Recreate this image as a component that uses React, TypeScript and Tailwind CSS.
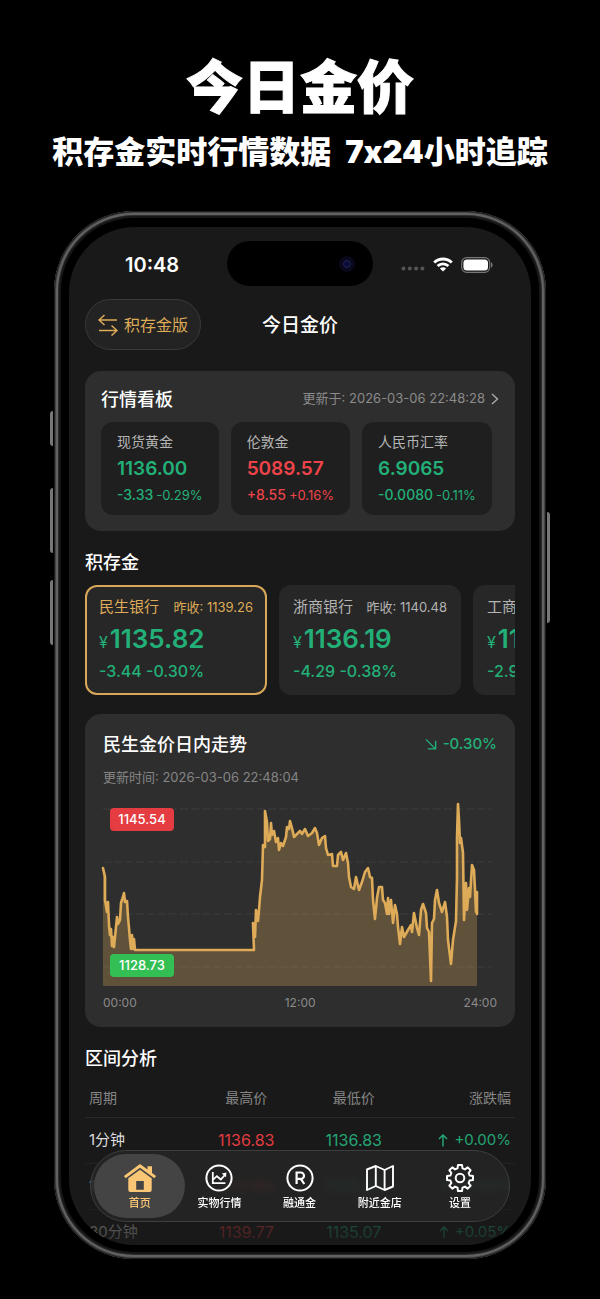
import clsx from "clsx";
import type { ReactNode } from "react";

type Tone = "up" | "down";

const toneColor: Record<Tone, string> = {
  up: "text-[#ee4449]",
  down: "text-[#23b078]",
};

const quotes: {
  name: string;
  price: string;
  change: string;
  percent: string;
  tone: Tone;
}[] = [
  { name: "现货黄金", price: "1136.00", change: "-3.33", percent: "-0.29%", tone: "down" },
  { name: "伦敦金", price: "5089.57", change: "+8.55", percent: "+0.16%", tone: "up" },
  { name: "人民币汇率", price: "6.9065", change: "-0.0080", percent: "-0.11%", tone: "down" },
];

const banks = [
  { name: "民生银行", last: "1139.26", price: "1135.82", change: "-3.44 -0.30%" },
  { name: "浙商银行", last: "1140.48", price: "1136.19", change: "-4.29 -0.38%" },
  { name: "工商银行", last: "1139.10", price: "1136.12", change: "-2.98 -0.26%" },
];

const ranges = [
  { period: "1分钟", high: "1136.83", low: "1136.83", change: "+0.00%" },
  { period: "10分钟", high: "1137.80", low: "1135.80", change: "+0.03%" },
  { period: "30分钟", high: "1139.77", low: "1135.07", change: "+0.05%" },
];

const trend =
  "0,68 2,77 2,100 4,112 5,102 6,125 7,135 8,129 9,146 10,137 11,147 13,127 14,117 15,124 17,120 18,103 19,100 21,93 22,102 24,101 25,117 26,128 27,140 28,149 29,135 30,149 31,139 32,150 151,150 150,123 152,137 153,110 155,121 156,110 157,97 159,80 160,45 162,47 162,11 164,22 165,41 167,39 168,23 169,35 171,31 173,42 175,38 176,50 178,43 180,46 183,37 184,27 186,29 187,21 189,28 191,37 194,34 197,31 199,34 202,29 205,36 209,33 212,28 214,33 216,45 219,38 222,36 223,48 225,55 229,54 230,66 234,66 235,55 238,52 240,60 243,53 245,63 246,77 248,87 251,89 253,77 256,90 259,82 262,72 265,68 267,77 269,78 270,100 272,119 274,98 276,87 279,87 280,100 282,103 284,114 285,98 286,114 288,100 290,123 292,105 294,114 295,127 297,144 299,127 301,137 305,130 308,125 309,132 311,113 314,128 316,135 318,110 320,104 323,113 324,128 326,132 328,181 329,123 331,119 332,100 334,90 336,103 339,112 342,102 344,117 345,140 348,164 350,140 353,121 354,77 354,37 355,4 356,20 357,43 358,38 360,53 361,120 363,83 364,110 366,88 367,97 369,65 371,70 372,90 373,112 374,92 374,114";

function TrendChart() {
  return (
    <div className="relative">
      <svg
        viewBox="0 0 394 186"
        preserveAspectRatio="none"
        className="h-[186px] w-full overflow-visible"
        role="img"
        aria-label="日内走势"
      >
        {[9, 62, 114, 167].map((y) => (
          <line key={y} x1="0" x2="388" y1={y} y2={y} stroke="#3c3c3c" strokeDasharray="8 3" />
        ))}
        <polygon points={`0,186 ${trend} 374,186`} fill="#deab58" fillOpacity="0.29" />
        <polyline
          points={trend}
          fill="none"
          stroke="#deab58"
          strokeWidth="2.6"
          strokeLinejoin="round"
          strokeLinecap="round"
        />
      </svg>
      <span className="absolute top-2 left-[7px] flex h-[23px] w-16 items-center justify-center rounded bg-[#e53c41] text-[13px] font-medium">
        1145.54
      </span>
      <span className="absolute bottom-[9px] left-[7px] flex h-[23px] w-16 items-center justify-center rounded bg-[#34bf55] text-[13px] font-medium">
        1128.73
      </span>
    </div>
  );
}

function StatusBar() {
  return (
    <div className="grid h-[45px] grid-cols-[1fr_auto_1fr] items-center">
      <span className="pt-0.5 pl-14 text-xl font-semibold">10:48</span>
      <div className="flex h-[45px] w-[146px] items-center justify-end rounded-full bg-black pr-[18px]">
        <span className="flex size-4 items-center justify-center rounded-full bg-[#08081a]">
          <span className="size-2 rounded-full border border-[#23235c] bg-[#0b0b35]" />
        </span>
      </div>
      <div className="flex items-center justify-end gap-2 pt-0.5 pr-[38px]">
        <svg width="24" height="5" viewBox="0 0 24 5" className="mt-2" fill="#555">
          <circle cx="2.5" cy="2.5" r="2" />
          <circle cx="8.8" cy="2.5" r="2" />
          <circle cx="15.1" cy="2.5" r="2" />
          <circle cx="21.4" cy="2.5" r="2" />
        </svg>
        <svg width="20" height="15" viewBox="0 0 20 15" fill="none" stroke="#fff" strokeWidth="2.8">
          <path d="M1.2 5.6a12.5 12.5 0 0 1 17.6 0" />
          <path d="M4.6 9.1a7.7 7.7 0 0 1 10.8 0" />
          <path d="M10 14.6 6.9 11.5a4.4 4.4 0 0 1 6.2 0Z" fill="#fff" stroke="none" />
        </svg>
        <svg width="32" height="16" viewBox="0 0 32 16">
          <rect x="0.7" y="0.7" width="28" height="14.6" rx="5" fill="none" stroke="#777" strokeWidth="1.2" />
          <rect x="2.4" y="2.4" width="24.6" height="11.2" rx="3.5" fill="#fff" />
          <path d="M30 5.3c2.2 1 2.2 4.400 0 5.400Z" fill="#777" />
        </svg>
      </div>
    </div>
  );
}

function HomeIcon() {
  return (
    <svg width="32" height="28" viewBox="0 0 32 28" fill="#f8c675">
      <path d="M16 0 .6 11.400a1 1 0 0 0-.2 1.400l.5.7a1 1 0 0 0 1.400.2L16 3.800l13.700 9.900a1 1 0 0 0 1.400-.2l.5-.7a1 1 0 0 0-.2-1.400L28 8.900V2.200h-4.500v3.400Z" />
      <path d="M16 5.700 4.300 14.200V26a2 2 0 0 0 2 2h19.400a2 2 0 0 0 2-2V14.200Z" />
      <path d="M12.200 17h7.600v8.800h-7.600Z" fill="#444" />
    </svg>
  );
}

function MarketIcon() {
  return (
    <svg width="28" height="28" viewBox="0 0 28 28" fill="none" stroke="#fff" strokeWidth="1.8">
      <circle cx="14" cy="14" r="12.600" strokeWidth="2" />
      <path d="M7.800 8v11.200h12.600M8.300 15.400l3.600-3.200 3.900 3.300 4.400-4.800" />
      <path d="m16.800 9.600 4.600-1-.4 4.700Z" fill="#fff" stroke="none" />
    </svg>
  );
}

function GoldIcon() {
  return (
    <svg width="28" height="28" viewBox="0 0 28 28" fill="none" stroke="#fff" strokeWidth="2">
      <circle cx="14" cy="14" r="12.600" />
      <path d="M10.600 20V8.500h4.200a3.200 3.200 0 0 1 0 6.400h-4.200M14.800 14.900l3.500 5.100" strokeWidth="2.200" />
    </svg>
  );
}

function MapIcon() {
  return (
    <svg width="28" height="28" viewBox="0 0 28 28" fill="none" stroke="#fff" strokeWidth="1.900" strokeLinejoin="round">
      <path d="M1 5.500 9.800 2l8.800 4L27 2v20.500L18.600 26 9.800 22 1 26Z" />
      <path d="M9.800 2v20M18.600 6v20" />
    </svg>
  );
}

function SettingsIcon() {
  return (
    <svg width="28" height="28" viewBox="0 0 28 28" fill="none" stroke="#fff" strokeWidth="2" strokeLinejoin="round">
      <path d="M11.500 4.400 12 1h4l.5 3.400 2.500 1 2.700-2 2.900 2.900-2 2.700 1 2.500 3.400.5v4l-3.400.5-1 2.500 2 2.700-2.900 2.900-2.700-2-2.500 1L16 27h-4l-.5-3.400-2.500-1-2.700 2-2.900-2.900 2-2.700-1-2.500L1 16v-4l3.400-.5 1-2.500-2-2.700 2.900-2.900 2.700 2Z" />
      <circle cx="14" cy="14" r="4.300" />
    </svg>
  );
}

const tabs: { label: string; icon: ReactNode; active?: boolean }[] = [
  { label: "首页", icon: <HomeIcon />, active: true },
  { label: "实物行情", icon: <MarketIcon /> },
  { label: "融通金", icon: <GoldIcon /> },
  { label: "附近金店", icon: <MapIcon /> },
  { label: "设置", icon: <SettingsIcon /> },
];

function TabBar() {
  return (
    <nav className="absolute inset-x-[21px] bottom-[23px] flex h-[72px] rounded-full border border-[#3c3f3e] bg-[#262626]/80 px-[9px] py-[3px] backdrop-blur-[3px]">
      {tabs.map((tab) => (
        <button
          key={tab.label}
          type="button"
          className={clsx(
            "flex flex-1 flex-col items-center justify-center gap-[3px] pt-[3px] text-[11px] leading-4 font-medium",
            tab.active && "-mx-[6px] grow-[1.14] rounded-full bg-[#444] text-[#f8c675]",
          )}
        >
          {tab.icon}
          {tab.label}
        </button>
      ))}
    </nav>
  );
}

function QuoteBoard() {
  return (
    <section className="mt-[21px] rounded-2xl bg-[#2e2e2e] px-4 pt-[14px] pb-4">
      <div className="flex h-7 items-center justify-between">
        <h2 className="pt-0.5 text-lg font-medium">行情看板</h2>
        <a href="#board" className="flex items-center gap-1.5 text-[13px] text-[#8b8b8b]">
          更新于: 2026-03-06 22:48:28
          <svg width="8" height="14" viewBox="0 0 8 14" fill="none" stroke="#aaa" strokeWidth="1.400">
            <path d="m1 2 5.500 5L1 12" />
          </svg>
        </a>
      </div>
      <div className="mt-[9px] flex gap-3">
        {quotes.map((quote) => (
          <div key={quote.name} className="rounded-xl bg-[#1f1f1f] px-4 pt-[9px] pb-[9px] whitespace-nowrap">
            <h3 className="text-sm leading-[22px] text-[#b4b4b4]">{quote.name}</h3>
            <p className={clsx("text-[19px] leading-8 font-semibold", toneColor[quote.tone])}>
              {quote.price}
            </p>
            <p className={clsx("flex items-baseline gap-[3px] leading-[21px]", toneColor[quote.tone])}>
              <span className="text-sm font-medium">{quote.change}</span>
              <span className="text-[13px]">{quote.percent}</span>
            </p>
          </div>
        ))}
      </div>
    </section>
  );
}

function BankList() {
  return (
    <section>
      <h2 className="mt-[18px] text-lg leading-7 font-medium">积存金</h2>
      <div className="mt-2 flex gap-3 overflow-hidden">
        {banks.map((bank, index) => (
          <button
            key={bank.name}
            type="button"
            className={clsx(
              "h-[110px] w-[182px] shrink-0 rounded-xl border-2 bg-[#272727] px-3 text-left",
              index === 0 ? "border-[#d8a858]" : "border-[#272727]",
            )}
          >
            <span
              className={clsx(
                "flex items-center justify-between leading-6",
                index === 0 ? "text-[#deab58]" : "text-[#b4b4b4]",
              )}
            >
              <span className="text-[15px]">{bank.name}</span>
              <span className="text-[13px]">昨收: {bank.last}</span>
            </span>
            <span className="flex items-baseline gap-0.5 pt-0.5 leading-9 font-semibold text-[#23b078]">
              <span className="text-base font-normal">¥</span>
              <span className="text-[26px]">{bank.price}</span>
            </span>
            <span className="block text-base leading-7 font-medium text-[#23b078]">{bank.change}</span>
          </button>
        ))}
      </div>
    </section>
  );
}

function TrendCard() {
  return (
    <section className="mt-[19px] rounded-2xl bg-[#2e2e2e] px-[18px] pt-4 pb-[13px]">
      <div className="flex h-7 items-center justify-between">
        <h2 className="pt-0.5 text-lg font-medium">民生金价日内走势</h2>
        <p className="flex items-center gap-1.5 text-[15px] font-medium text-[#23b078]">
          <svg width="12" height="12" viewBox="0 0 13 13" fill="none" stroke="currentColor" strokeWidth="1.500">
            <path d="m1 1.500 10 10M11.500 3v8.800H3" />
          </svg>
          -0.30%
        </p>
      </div>
      <p className="mt-[9px] mb-3 text-[13px] leading-[21px] text-[#858585]">
        更新时间: 2026-03-06 22:48:04
      </p>
      <TrendChart />
      <div className="mt-[6px] flex justify-between text-xs leading-[22px] text-[#8b8b8b]">
        <span>00:00</span>
        <span>12:00</span>
        <span>24:00</span>
      </div>
    </section>
  );
}

function RangeTable() {
  return (
    <section className="-mb-[11px]">
      <h2 className="mt-[18px] text-lg leading-7 font-medium">区间分析</h2>
      <table className="mt-[7px] w-full table-fixed">
        <thead>
          <tr className="h-[37px] border-b border-[#292929] text-sm text-[#858585]">
            <th className="pl-1 text-left font-normal">周期</th>
            <th className="text-center font-normal">最高价</th>
            <th className="text-center font-normal">最低价</th>
            <th className="pr-1 text-right font-normal">涨跌幅</th>
          </tr>
        </thead>
        <tbody>
          {ranges.map((range) => (
            <tr key={range.period} className="h-[46px] border-b border-[#242424] text-[15px]">
              <td className="pl-1 text-[#ddd]">{range.period}</td>
              <td className="text-center text-base text-[#e03c41]">{range.high}</td>
              <td className="text-center text-base text-[#23a574]">{range.low}</td>
              <td className="pr-1 text-[#23a574]">
                <span className="flex items-center justify-end gap-1.5">
                  <svg width="10" height="13" viewBox="0 0 10 13" fill="none" stroke="currentColor" strokeWidth="1.500">
                    <path d="M5 12.500V1M1 5l4-4 4 4" />
                  </svg>
                  {range.change}
                </span>
              </td>
            </tr>
          ))}
        </tbody>
      </table>
    </section>
  );
}

export default function App() {
  return (
    <main className="flex flex-col bg-black px-[54px] pb-10 font-['Inter','Noto_Sans_CJK_SC',sans-serif] text-white">
      <header className="-mx-[54px] pt-[51px] text-center font-black">
        <h1 className="text-[57px] leading-[74px] [-webkit-text-stroke:1px_white]">今日金价</h1>
        {/* Inter turns "7x24" into "7×24" unless contextual alternates are off */}
        <p className="mt-[5px] flex justify-center gap-[14px] text-[31px] leading-[44px] [font-variant-ligatures:no-contextual]">
          <span>积存金实时行情数据</span>
          <span>7x24小时追踪</span>
        </p>
      </header>

      {/* Device */}
      <div className="relative mt-[37px] rounded-[80px] bg-black px-[15px] pt-4 pb-[14px] shadow-[inset_0_0_0_1px_#1c1c1c,inset_0_0_0_2px_#444,inset_0_0_0_4px_#626262,inset_0_0_0_5px_#2c2c2c,inset_0_0_0_7px_#161616]">
        <span className="absolute top-[200px] -left-1 h-[35px] w-[3px] rounded-l bg-[#777]" />
        <span className="absolute top-[277px] -left-1 h-[65px] w-[3px] rounded-l bg-[#777]" />
        <span className="absolute top-[369px] -left-1 h-[65px] w-[3px] rounded-l bg-[#777]" />
        <span className="absolute top-[301px] -right-1 h-[111px] w-[3px] rounded-r bg-[#777]" />

        <div className="relative overflow-hidden rounded-[66px] bg-[#191919] pt-[14px]">
          <StatusBar />
          <div className="px-4">
            <div className="mt-[13px] grid grid-cols-[1fr_auto_1fr] items-center">
              <button
                type="button"
                className="flex h-[51px] items-center gap-[6px] justify-self-start rounded-full border border-[#3a3a3a] bg-[#232323] px-3 text-base text-[#deab58]"
              >
                <svg width="20" height="22" viewBox="0 0 20 22" fill="none" stroke="currentColor" strokeWidth="1.500">
                  <path d="M19 6H1M6.500 1 1 6l5.500 5M1 16.500h18M13.500 11.500l5.500 5-5.500 5" />
                </svg>
                积存金版
              </button>
              <h1 className="pt-1 text-[19px] font-medium">今日金价</h1>
            </div>
            <QuoteBoard />
            <BankList />
            <TrendCard />
            <RangeTable />
          </div>
          <div className="absolute inset-x-0 bottom-0 h-24 bg-linear-to-b from-[#191919]/0 to-[#191919]/85" />
          <TabBar />
        </div>
      </div>
    </main>
  );
}
